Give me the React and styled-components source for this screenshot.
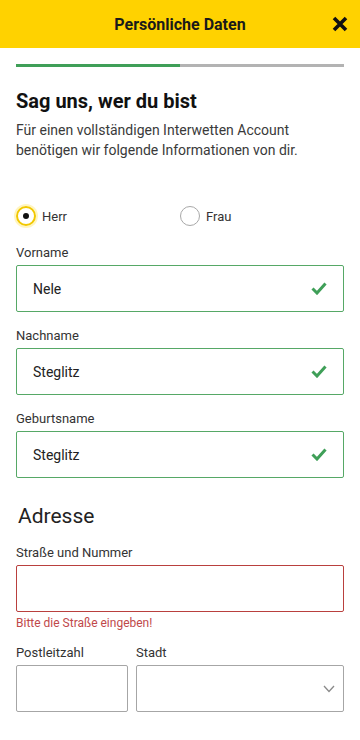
import styled, { createGlobalStyle } from "styled-components";

const GlobalStyle = createGlobalStyle`
  * { box-sizing: border-box; }
  body {
    margin: 0;
    background: #fff;
    font-family: Roboto, "Liberation Sans", Arial, sans-serif;
    color: #222;
  }
`;

const Header = styled.header`
  position: relative;
  height: 48px;
  background: #ffd200;
  display: flex;
  align-items: center;
  justify-content: center;
`;

const Title = styled.h1`
  margin: 0;
  font-size: 16px;
  font-weight: 700;
  color: #1a1a1a;
`;

const CloseButton = styled.button`
  position: absolute;
  right: 12px;
  top: 16px;
  width: 16px;
  height: 16px;
  padding: 0;
  border: 0;
  background: none;
  display: flex;
`;

const Content = styled.main`
  padding: 16px 16px 24px;
`;

const Progress = styled.div`
  display: flex;
  height: 3px;
  background: #b3b3b3;
`;

const ProgressFill = styled.div`
  height: 100%;
  background: #3f9f58;
`;

const Heading = styled.h2`
  margin: 20px 0 5px;
  font-size: 20px;
  line-height: 28px;
  font-weight: 700;
  color: #111;
`;

const Intro = styled.p`
  margin: 0;
  font-size: 14px;
  line-height: 20px;
  color: #3a3a3a;
`;

const RadioGroup = styled.div`
  display: grid;
  grid-template-columns: 1fr 1fr;
  margin: 46px 0 19px;
`;

const RadioLabel = styled.label`
  display: flex;
  align-items: center;
  gap: 6px;
  height: 20px;
  font-size: 13px;
  color: #333;
`;

const RadioCircle = styled.span`
  width: 20px;
  height: 20px;
  border-radius: 50%;
  display: flex;
  align-items: center;
  justify-content: center;
  border: ${p => (p.$checked ? "2px solid #f2c800" : "1px solid #a8a8a8")};
  box-shadow: ${p => (p.$checked ? "0 0 0 2px rgba(255, 214, 0, 0.25)" : "none")};

  &::after {
    content: "";
    display: ${p => (p.$checked ? "block" : "none")};
    width: 6px;
    height: 6px;
    border-radius: 50%;
    background: #111;
  }
`;

const Field = styled.div`
  margin-bottom: ${p => p.$gap ?? 16}px;
`;

const Label = styled.div`
  font-size: 13px;
  line-height: 16px;
  margin-bottom: 4px;
  color: #333;
`;

const borders = {
  valid: "#56a866",
  error: "#b9403e",
  normal: "#a6a6a6",
};

const InputBox = styled.div`
  height: 47px;
  border: 1px solid ${p => borders[p.$state || "normal"]};
  border-radius: 2px;
  display: flex;
  align-items: center;
  justify-content: space-between;
  padding: 0 16px;
  font-size: 14px;
  color: #222;
`;

const ErrorText = styled.div`
  margin-top: 3px;
  font-size: 12px;
  line-height: 16px;
  color: #c0484a;
`;

const SectionTitle = styled.h3`
  margin: 24px 0 15px;
  padding-left: 2px;
  font-size: 21px;
  line-height: 28px;
  font-weight: 400;
  color: #222;
`;

const Row = styled.div`
  display: grid;
  grid-template-columns: 112px 1fr;
  gap: 8px;
`;

const SelectBox = styled(InputBox)`
  padding-right: 8px;
`;

const Check = () => (
  <svg width="16" height="13" viewBox="0 0 16 13">
    <polyline
      points="1.5,6.5 6,11 14.5,1.5"
      fill="none"
      stroke="#3f9f58"
      strokeWidth="3"
    />
  </svg>
);

const Chevron = () => (
  <svg width="12" height="8" viewBox="0 0 12 8">
    <polyline points="1,1 6,6.5 11,1" fill="none" stroke="#8a8a8a" strokeWidth="1.3" />
  </svg>
);

const TextField = ({ label, value, state }) => (
  <Field>
    <Label>{label}</Label>
    <InputBox $state={state}>
      <span>{value}</span>
      {state === "valid" && <Check />}
    </InputBox>
  </Field>
);

export default function App() {
  return (
    <>
      <GlobalStyle />
      <Header>
        <Title>Persönliche Daten</Title>
        <CloseButton aria-label="Schließen">
          <svg width="16" height="16" viewBox="0 0 16 16">
            <path d="M2 2 L14 14 M14 2 L2 14" stroke="#111" strokeWidth="3.6" />
          </svg>
        </CloseButton>
      </Header>
      <Content>
        <Progress>
          <ProgressFill style={{ width: "50%" }} />
        </Progress>
        <Heading>Sag uns, wer du bist</Heading>
        <Intro>
          Für einen vollständigen Interwetten Account benötigen wir folgende
          Informationen von dir.
        </Intro>
        <RadioGroup>
          <RadioLabel>
            <RadioCircle $checked />
            Herr
          </RadioLabel>
          <RadioLabel>
            <RadioCircle />
            Frau
          </RadioLabel>
        </RadioGroup>
        <TextField label="Vorname" value="Nele" state="valid" />
        <TextField label="Nachname" value="Steglitz" state="valid" />
        <Field $gap={0}>
          <Label>Geburtsname</Label>
          <InputBox $state="valid">
            <span>Steglitz</span>
            <Check />
          </InputBox>
        </Field>
        <SectionTitle>Adresse</SectionTitle>
        <Field $gap={14}>
          <Label>Straße und Nummer</Label>
          <InputBox $state="error" />
          <ErrorText>Bitte die Straße eingeben!</ErrorText>
        </Field>
        <Row>
          <Field $gap={0}>
            <Label>Postleitzahl</Label>
            <InputBox />
          </Field>
          <Field $gap={0}>
            <Label>Stadt</Label>
            <SelectBox>
              <span />
              <Chevron />
            </SelectBox>
          </Field>
        </Row>
      </Content>
    </>
  );
}
